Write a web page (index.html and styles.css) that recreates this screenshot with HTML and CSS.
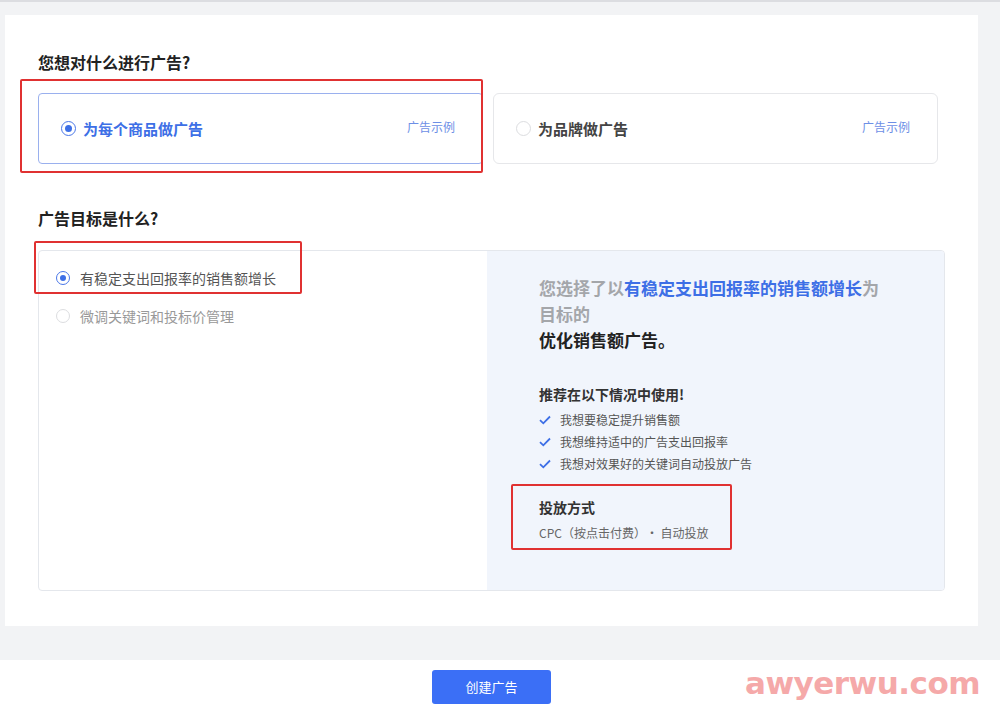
FILE: index.html
```html
<!DOCTYPE html>
<html lang="zh-CN">
<head>
    <meta charset="UTF-8">
    <title>创建广告</title>
    <link rel="stylesheet" href="styles.css">
</head>
<body>
    <div class="page">
        <div class="panel">
            <h2 class="title">您想对什么进行广告?</h2>
            <div class="cards">
                <div class="card active">
                    <span class="radio on"></span>
                    <span class="card-name">为每个商品做广告</span>
                    <span class="card-link">广告示例</span>
                    <div class="mark mark-card"></div>
                </div>
                <div class="card">
                    <span class="radio"></span>
                    <span class="card-name">为品牌做广告</span>
                    <span class="card-link">广告示例</span>
                </div>
            </div>

            <h2 class="title title-goal">广告目标是什么?</h2>
            <div class="goal">
                <div class="goal-left">
                    <div class="option selected">
                        <span class="radio small on"></span>
                        <span>有稳定支出回报率的销售额增长</span>
                        <div class="mark mark-option"></div>
                    </div>
                    <div class="option">
                        <span class="radio small"></span>
                        <span>微调关键词和投标价管理</span>
                    </div>
                </div>
                <div class="goal-right">
                    <div class="summary">
                        <span class="muted">您选择了以</span><span class="hl">有稳定支出回报率的销售额增长</span><span class="muted">为<br>目标的</span><br>
                        优化销售额广告。
                    </div>
                    <div class="sub-title">推荐在以下情况中使用!</div>
                    <ul class="checks">
                        <li><svg width="12" height="10" viewBox="0 0 12 10"><path d="M1 5.2 L4.3 8.3 L11 1.5" fill="none" stroke="#3d6fe6" stroke-width="1.8"/></svg>我想要稳定提升销售额</li>
                        <li><svg width="12" height="10" viewBox="0 0 12 10"><path d="M1 5.2 L4.3 8.3 L11 1.5" fill="none" stroke="#3d6fe6" stroke-width="1.8"/></svg>我想维持适中的广告支出回报率</li>
                        <li><svg width="12" height="10" viewBox="0 0 12 10"><path d="M1 5.2 L4.3 8.3 L11 1.5" fill="none" stroke="#3d6fe6" stroke-width="1.8"/></svg>我想对效果好的关键词自动投放广告</li>
                    </ul>
                    <div class="delivery">
                        <div class="sub-title plain">投放方式</div>
                        <div class="delivery-text">CPC（按点击付费）• 自动投放</div>
                        <div class="mark mark-delivery"></div>
                    </div>
                </div>
            </div>
        </div>
    </div>
    <div class="footer">
        <button class="create-btn">创建广告</button>
        <span class="watermark">awyerwu.com</span>
    </div>
</body>
</html>
```

FILE: styles.css
```css
body {
    margin: 0;
    background: #f2f3f5;
    font-family: "Noto Sans CJK SC", "Noto Sans", sans-serif;
    color: #333;
}

.page {
    border-top: 2px solid #dcdde1;
    padding: 13px 22px 34px 5px;
}

.panel {
    background: #fff;
    height: 575px;
    padding: 36px 33px 0 33px;
}

.title {
    margin: 0 0 20px 0;
    font-size: 16px;
    line-height: 22px;
    font-weight: bold;
    color: #222;
}

.title-goal {
    margin-top: 43px;
    margin-bottom: 21px;
}

.cards {
    display: flex;
    gap: 10px;
}

.card {
    position: relative;
    width: 445px;
    height: 71px;
    box-sizing: border-box;
    border: 1px solid #e6e7ea;
    border-radius: 6px;
    display: flex;
    align-items: center;
    padding: 0 27px 0 22px;
}

.card.active {
    border-color: #9ab0ee;
    border-radius: 4px;
}

.radio {
    width: 15px;
    height: 15px;
    box-sizing: border-box;
    border: 1px solid #dcdde0;
    border-radius: 50%;
    background: #fff;
    display: flex;
    justify-content: center;
    align-items: center;
    flex-shrink: 0;
}

.radio.on {
    border-color: #4a77e8;
}

.radio.on:after {
    content: '';
    width: 7px;
    height: 7px;
    border-radius: 50%;
    background: #3d6fe6;
}

.radio.small {
    width: 14px;
    height: 14px;
}

.radio.small.on:after {
    width: 6px;
    height: 6px;
}

.card-name {
    margin-left: 7px;
    font-size: 15px;
    font-weight: bold;
    color: #444;
    flex: 1;
    margin-top: -1px;
}

.card.active .card-name {
    color: #3d6fe6;
}

.card-link {
    font-size: 12px;
    color: #6d8fe6;
    margin-top: -4px;
}

.goal {
    display: flex;
    width: 907px;
    height: 341px;
    box-sizing: border-box;
    border: 1px solid #e4e7ec;
    border-radius: 4px;
}

.goal-left {
    width: 448px;
    padding: 17px 0 0 17px;
    box-sizing: border-box;
}

.option {
    position: relative;
    display: flex;
    align-items: center;
    gap: 10px;
    height: 20px;
    font-size: 14px;
    color: #999;
    margin-bottom: 18px;
}

.option.selected {
    color: #555;
}

.goal-right {
    flex: 1;
    background: #f1f5fc;
    border-radius: 0 3px 3px 0;
    padding: 24px 0 0 52px;
}

.summary {
    font-size: 17px;
    line-height: 26px;
    font-weight: bold;
    color: #222;
}

.muted {
    color: #a4a6aa;
}

.hl {
    color: #3d6fe6;
}

.sub-title {
    margin-top: 31px;
    font-size: 14px;
    line-height: 20px;
    font-weight: bold;
    color: #333;
}

.checks {
    list-style: none;
    margin: 5px 0 0 0;
    padding: 0;
}

.checks li {
    display: flex;
    align-items: center;
    gap: 9px;
    font-size: 12px;
    line-height: 22px;
    color: #555;
}

.delivery {
    position: relative;
    margin-top: 22px;
}

.sub-title.plain {
    margin-top: 0;
}

.delivery-text {
    margin-top: 6px;
    font-size: 12px;
    line-height: 20px;
    color: #666;
}

.mark {
    position: absolute;
    border: 2px solid #e03131;
    border-radius: 2px;
    pointer-events: none;
}

.mark-card {
    left: -19px;
    top: -15px;
    width: 459px;
    height: 90px;
}

.mark-option {
    left: -22px;
    top: -27px;
    width: 264px;
    height: 49px;
}

.mark-delivery {
    left: -28px;
    top: -13px;
    width: 217px;
    height: 62px;
}

.footer {
    position: relative;
    height: 53px;
    background: #fff;
    padding-left: 432px;
    display: flex;
    align-items: center;
}

.create-btn {
    width: 119px;
    height: 34px;
    border: none;
    border-radius: 3px;
    background: #3b6ff6;
    color: #fff;
    font-family: inherit;
    font-size: 13px;
}

.watermark {
    position: absolute;
    left: 745px;
    top: 5px;
    font-family: "DejaVu Sans", sans-serif;
    font-size: 31px;
    font-weight: bold;
    color: #f5a9a9;
    letter-spacing: -0.5px;
}
```
